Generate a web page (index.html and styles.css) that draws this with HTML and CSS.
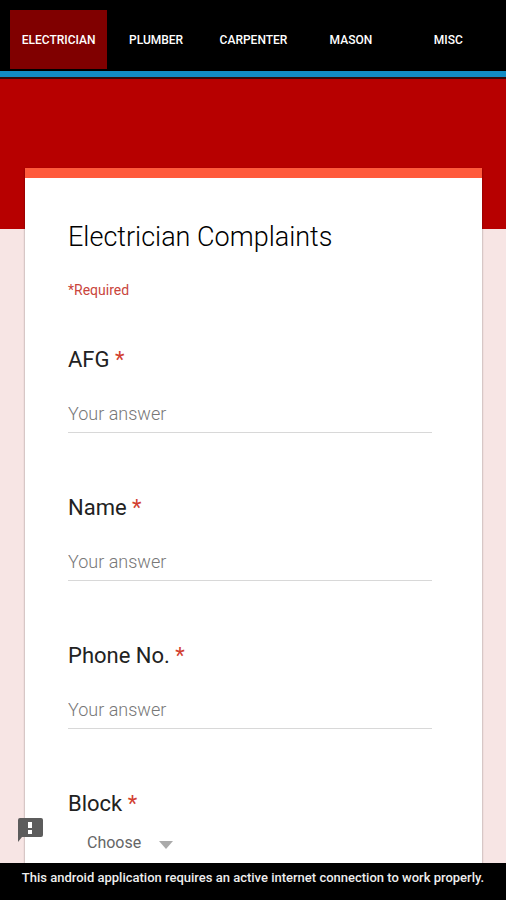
FILE: index.html
```html
<!DOCTYPE html>
<html lang="en">
<head>
<meta charset="utf-8">
<meta name="viewport" content="width=device-width, initial-scale=1">
<title>Electrician Complaints</title>
<link rel="stylesheet" href="styles.css">
</head>
<body>
<nav class="tabs" aria-label="Complaint type">
  <a class="tab tab-active" href="#electrician" aria-current="page">ELECTRICIAN</a>
  <a class="tab" href="#plumber">PLUMBER</a>
  <a class="tab" href="#carpenter">CARPENTER</a>
  <a class="tab" href="#mason">MASON</a>
  <a class="tab" href="#misc">MISC</a>
</nav>
<main class="content">
  <form class="card">
    <h1 class="title">Electrician Complaints</h1>
    <p class="required-note">*Required</p>
    <div class="field">
      <label class="label" for="afg">AFG <span class="star">*</span></label>
      <input class="answer" id="afg" type="text" placeholder="Your answer" required>
    </div>
    <div class="field">
      <label class="label" for="name">Name <span class="star">*</span></label>
      <input class="answer" id="name" type="text" placeholder="Your answer" required>
    </div>
    <div class="field">
      <label class="label" for="phone">Phone No. <span class="star">*</span></label>
      <input class="answer" id="phone" type="tel" placeholder="Your answer" required>
    </div>
    <div class="field">
      <label class="label" for="block">Block <span class="star">*</span></label>
      <div class="picker">
        <select class="select" id="block" required>
          <option>Choose</option>
        </select>
        <svg class="arrow" viewBox="0 0 14 8" aria-hidden="true"><path d="M0 0h14L7 8z"/></svg>
      </div>
    </div>
  </form>
  <button class="report" type="button" aria-label="Report a problem">
    <svg class="report-icon" viewBox="0 0 26 26" aria-hidden="true">
      <path class="bubble" d="M3 1h21q2 0 2 2v15q0 2-2 2H5l-4 5V3q0-2 2-2z"/>
      <path class="mark" d="M11 5h4v6h-4zM11 13h4v4h-4z"/>
    </svg>
  </button>
</main>
<footer class="notice">This android application requires an active internet connection to work properly.</footer>
</body>
</html>
```
FILE: styles.css
```css
* {
  box-sizing: border-box;
}

body {
  display: flex;
  flex-direction: column;
  height: 100vh;
  margin: 0;
  overflow: hidden;
  font-family: Roboto, "Liberation Sans", sans-serif;
  background: #000;
}

.tabs {
  display: grid;
  grid-template-columns: repeat(5, 1fr);
  flex: none;
  padding: 10px 9px 2px 10px;
  border-bottom: 6px solid #118bc4;
}

.tab {
  padding: 20px 0 19px;
  color: #fff;
  font-size: 12px;
  font-weight: 500;
  line-height: 20px;
  text-align: center;
  text-decoration: none;
}

.tab-active {
  background: #800000;
}

.content {
  position: relative;
  flex: 1;
  min-height: 0;
  padding: 89px 24px 0 25px;
  overflow: hidden;
  border-top: 2px solid #35090a;
  background: linear-gradient(#b70000 150px, #f7e5e4 150px);
}

.card {
  padding: 40px 50px 40px 43px;
  border-top: 10px solid #ff5a3c;
  background: #fff;
  box-shadow: 0 1px 2px rgba(0, 0, 0, 0.4);
}

.title {
  margin: 0;
  color: #000;
  font-size: 27px;
  font-weight: 300;
  line-height: 38px;
}

.required-note {
  margin: 24px 0 44px;
  color: #c9453b;
  font-size: 14px;
  line-height: 20px;
}

.field {
  margin-bottom: 59px;
}

.label {
  display: block;
  color: #222;
  font-size: 22px;
  line-height: 32px;
}

.star {
  color: #d23f31;
}

.answer {
  display: block;
  width: 100%;
  height: 40px;
  margin-top: 17px;
  padding: 2px 0 0;
  border: 0;
  border-bottom: 1px solid #d8d8d8;
  outline: 0;
  color: #222;
  background: transparent;
  font: 300 18px/24px Roboto, "Liberation Sans", sans-serif;
}

.answer::placeholder {
  color: #777;
  opacity: 1;
}

.picker {
  display: flex;
  align-items: center;
  gap: 17px;
  margin-top: 11px;
  padding-left: 19px;
}

.select {
  padding: 0;
  border: 0;
  appearance: none;
  color: #666;
  background: transparent;
  font: 16px/24px Roboto, "Liberation Sans", sans-serif;
}

.arrow {
  width: 14px;
  height: 8px;
  margin-top: 3px;
  fill: #aaa;
}

.report {
  position: absolute;
  bottom: 20px;
  left: 17px;
  padding: 0;
  border: 0;
  background: transparent;
}

.report-icon {
  display: block;
  width: 26px;
  height: 26px;
}

.bubble {
  fill: #5c5c5c;
}

.mark {
  fill: #fff;
}

.notice {
  flex: none;
  padding: 5px 0 12px;
  color: #eee;
  font-size: 13px;
  font-weight: 500;
  line-height: 20px;
  text-align: center;
}
```
